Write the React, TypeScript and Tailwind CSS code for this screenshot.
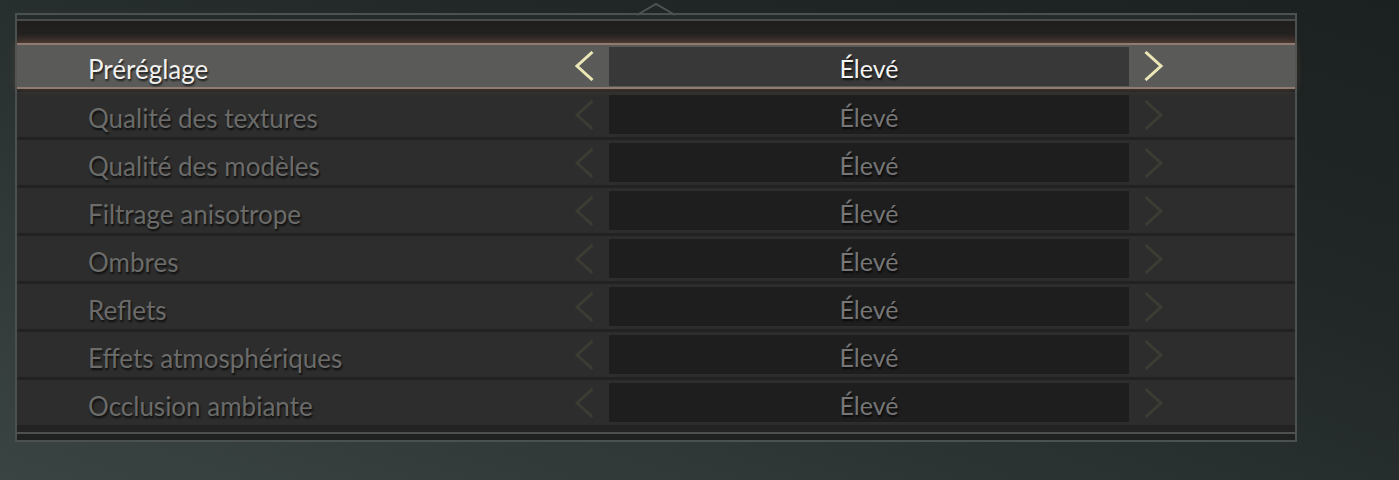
const settings = [
  'Préréglage',
  'Qualité des textures',
  'Qualité des modèles',
  'Filtrage anisotrope',
  'Ombres',
  'Reflets',
  'Effets atmosphériques',
  'Occlusion ambiante',
]

function Chevron({ dir, active }: { dir: 'left' | 'right'; active: boolean }) {
  return (
    <svg width="20" height="30" viewBox="0 0 20 30" className="block">
      <polyline
        points={dir === 'left' ? '18.5,1 3,15 18.5,29' : '1.5,1 17,15 1.5,29'}
        fill="none"
        stroke={active ? '#ece7b6' : '#3d3c34'}
        strokeWidth="3"
        strokeLinejoin="miter"
      />
    </svg>
  )
}

function SettingRow({ label, active }: { label: string; active: boolean }) {
  return (
    <div
      className={
        active
          ? 'flex items-center h-[46px] border-y-2 border-[#8f7b70] bg-[#5a5b59] shadow-[0_0_8px_rgba(140,100,80,0.45)] relative'
          : 'flex items-center h-[48px] border-t-[3px] border-[#212221] bg-[#2c2d2c]'
      }
    >
      <div
        className={`w-[553px] pl-[71px] pt-[6px] text-[26px] leading-none [text-shadow:1px_2px_2px_rgba(0,0,0,0.75)] ${
          active ? 'text-[#f1f1ef]' : 'text-[#6b6b6a]'
        }`}
      >
        {label}
      </div>
      <div className="w-[39px] pl-[4px]">
        <Chevron dir="left" active={active} />
      </div>
      <div
        className={`w-[520px] h-[39px] flex items-center justify-center pt-[5px] text-[25px] leading-none [text-shadow:1px_2px_2px_rgba(0,0,0,0.75)] ${
          active ? 'bg-[#383838] text-[#f3f3f3]' : 'bg-[#1d1e1d] text-[#767676]'
        }`}
      >
        Élevé
      </div>
      <div className="pl-[15px]">
        <Chevron dir="right" active={active} />
      </div>
    </div>
  )
}

export default function App() {
  return (
    <div
      className="relative w-[1399px] h-[480px] overflow-hidden pt-[13px] pl-[15px] bg-[linear-gradient(200deg,#1b2120_0%,#212827_35%,#3a4443_100%)]"
      style={{ fontFamily: 'Lato, "Open Sans", sans-serif' }}
    >
      <svg width="40" height="14" viewBox="0 0 40 14" className="absolute left-[636px] top-[2px]">
        <polyline points="1,13 20,2 39,13" fill="none" stroke="#4d5353" strokeWidth="2" />
      </svg>
      <div className="w-[1282px] border-2 border-[#4b5050] bg-[#242a29]">
        <div className="h-[4px] bg-[#252b2a]" />
        <div className="h-[2px] bg-[#474b4a]" />
        <div className="h-[22px] bg-[linear-gradient(180deg,#1f1e1d_0%,#232120_55%,#3b2f29_100%)]" />
        {settings.map((s, i) => (
          <SettingRow key={s} label={s} active={i === 0} />
        ))}
        <div className="h-[7px] bg-[#222322]" />
        <div className="h-[2px] bg-[#4e4f4f]" />
        <div className="h-[6px] bg-[#1f2020]" />
      </div>
    </div>
  )
}
